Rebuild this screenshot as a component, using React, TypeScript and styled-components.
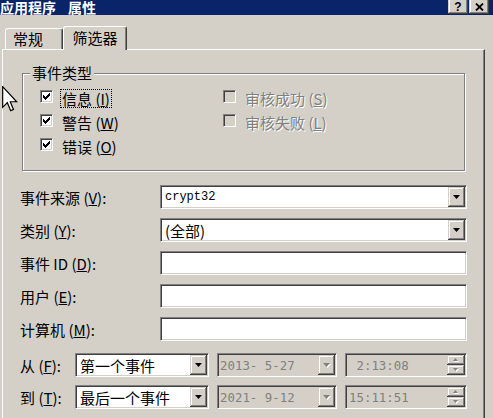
import React from "react";
import styled, { createGlobalStyle, css } from "styled-components";

const FACE = "#d4d0c8";
const SHADOW = "#808080";
const DARK = "#404040";
const HI = "#ffffff";
const CJK = `"Noto Sans CJK SC", "Noto Sans", sans-serif`;

const Global = createGlobalStyle`
  html, body { margin: 0; padding: 0; background: ${FACE}; overflow: hidden; }
  #root { width: 493px; height: 418px; }
`;

const raised = css`
  box-shadow: inset -1px -1px ${DARK}, inset 1px 1px ${FACE}, inset -2px -2px ${SHADOW}, inset 2px 2px ${HI};
`;

const sunken = css`
  border: 1px solid;
  border-color: ${SHADOW} ${HI} ${HI} ${SHADOW};
  box-shadow: inset 1px 1px ${DARK}, inset -1px -1px ${FACE};
  padding: 1px;
`;

const Window = styled.div`
  width: 493px;
  height: 418px;
  overflow: hidden;
  position: relative;
  background: ${FACE};
  font-family: ${CJK};
  font-size: 15px;
  color: #000;
`;

const TitleBar = styled.div`
  height: 15px;
  background: #0a246a;
  display: flex;
  align-items: flex-end;
  justify-content: space-between;
`;

const Title = styled.div`
  display: flex;
  gap: 12px;
  color: #fff;
  font-weight: bold;
  font-size: 14px;
  line-height: 14px;
  margin: 0 0 1px 0;
  white-space: nowrap;
`;

const CaptionGroup = styled.div`
  display: flex;
  gap: 1px;
  margin: 0 4px 1px 0;
`;

const CaptionButton = styled.div`
  width: 20px;
  height: 17px;
  box-sizing: border-box;
  background: ${FACE};
  ${raised};
  display: flex;
  align-items: center;
  justify-content: center;
  padding-top: 2px;
  font-family: "Liberation Sans", sans-serif;
  font-weight: bold;
  font-size: 12px;
  line-height: 12px;
`;

const Body = styled.div`
  padding: 11px 0 0 2px;
`;

const TabStrip = styled.div`
  display: flex;
  align-items: flex-end;
  height: 23px;
  padding-left: 3px;
`;

const Tab = styled.div<{ $active?: boolean }>`
  box-sizing: border-box;
  display: flex;
  align-items: center;
  background: ${FACE};
  border-top: 1px solid ${HI};
  border-left: 1px solid ${HI};
  border-right: 1px solid ${DARK};
  border-radius: 3px 3px 0 0;
  box-shadow: inset -1px 0 ${SHADOW};
  line-height: 16px;
  white-space: nowrap;
  ${(p) =>
    p.$active
      ? css`
          width: 64px;
          height: 24px;
          margin-bottom: -1px;
          position: relative;
          z-index: 1;
          justify-content: center;
          padding-bottom: 2px;
        `
      : css`
          width: 58px;
          height: 21px;
          padding-left: 7px;
        `}
`;

const Panel = styled.div`
  width: 483px;
  height: 420px;
  box-sizing: border-box;
  border-top: 1px solid ${HI};
  border-left: 1px solid ${HI};
  border-right: 1px solid ${DARK};
  box-shadow: inset -1px 0 ${SHADOW};
  padding: 23px 17px 0 17px;
`;

const Group = styled.div`
  position: relative;
  height: 98px;
  box-sizing: border-box;
  margin: 0 2px 0 2px;
  border: 1px solid ${SHADOW};
  box-shadow: inset 1px 1px ${HI}, 1px 1px ${HI};
  padding: 15px 0 0 17px;
  display: grid;
  grid-template-columns: 183px 1fr;
  grid-template-rows: repeat(3, 19px);
  grid-auto-flow: column;
  row-gap: 5px;
`;

const Legend = styled.div`
  position: absolute;
  top: -9px;
  left: 7px;
  padding: 0 2px;
  background: ${FACE};
  line-height: 16px;
`;

const CheckRow = styled.div`
  display: flex;
  align-items: flex-start;
  gap: 7px;
`;

const CheckBox = styled.div<{ $disabled?: boolean }>`
  width: 13px;
  height: 13px;
  box-sizing: border-box;
  margin-top: 1px;
  ${sunken};
  background: ${(p) => (p.$disabled ? FACE : HI)};
  display: flex;
  align-items: center;
  justify-content: center;
`;

const CheckLabel = styled.div<{ $focus?: boolean; $disabled?: boolean }>`
  border: 1px ${(p) => (p.$focus ? "dotted #000" : "solid transparent")};
  padding: 0 1px;
  line-height: 17px;
  white-space: nowrap;
  color: ${(p) => (p.$disabled ? SHADOW : "#000")};
  text-shadow: ${(p) => (p.$disabled ? `1px 1px 0 ${HI}` : "none")};
`;

const Fields = styled.div<{ $gap: number; $top: number }>`
  display: flex;
  flex-direction: column;
  gap: ${(p) => p.$gap}px;
  margin-top: ${(p) => p.$top}px;
`;

const FieldRow = styled.div`
  display: flex;
  align-items: center;
  height: 24px;
`;

const FieldLabel = styled.div<{ $w: number }>`
  width: ${(p) => p.$w}px;
  flex: none;
  white-space: nowrap;
  line-height: 17px;
`;

const Controls = styled.div`
  flex: 1;
  display: flex;
  gap: 8px;
  height: 100%;
`;

const Box = styled.div<{ $w?: number; $disabled?: boolean }>`
  ${sunken};
  box-sizing: border-box;
  height: 24px;
  display: flex;
  align-items: stretch;
  background: ${(p) => (p.$disabled ? FACE : HI)};
  ${(p) => (p.$w ? `width: ${p.$w}px; flex: none;` : "flex: 1;")}
`;

const BoxText = styled.div<{ $mono?: boolean; $disabled?: boolean; $pad?: number }>`
  flex: 1;
  display: flex;
  align-items: center;
  padding-left: ${(p) => p.$pad ?? 3}px;
  white-space: pre;
  overflow: hidden;
  color: ${(p) => (p.$disabled ? SHADOW : "#000")};
  ${(p) =>
    p.$mono
      ? css`
          font-family: ${p.$disabled ? `"DejaVu Sans Mono", monospace` : `"Liberation Mono", monospace`};
          font-size: ${p.$disabled ? "12.4px" : "12px"};
        `
      : css`
          font-size: 15px;
        `}
`;

const DropButton = styled.div`
  width: 17px;
  flex: none;
  background: ${FACE};
  ${raised};
  display: flex;
  align-items: center;
  justify-content: center;
`;

const SpinColumn = styled.div`
  width: 18px;
  flex: none;
  display: flex;
  flex-direction: column;
`;

const SpinButton = styled.div`
  flex: 1;
  background: ${FACE};
  ${raised};
  display: flex;
  align-items: center;
  justify-content: center;
`;

const Cursor = styled.svg`
  position: absolute;
  left: 2px;
  top: 86px;
  z-index: 5;
`;

const Arrow: React.FC<{ disabled?: boolean; small?: boolean; up?: boolean }> = ({ disabled, small, up }) => {
  const w = small ? 5 : 7;
  const h = small ? 3 : 4;
  const pts = up ? `0,${h} ${w},${h} ${w / 2},0` : `0,0 ${w},0 ${w / 2},${h}`;
  return (
    <svg width={w + 1} height={h + 1} viewBox={`0 0 ${w + 1} ${h + 1}`}>
      {disabled && <polygon points={pts} fill={HI} transform="translate(1,1)" />}
      <polygon points={pts} fill={disabled ? SHADOW : "#000"} />
    </svg>
  );
};

const CHECK_PIXELS: [number, number][] = [
  [6, 0],
  [5, 1], [6, 1],
  [0, 2], [4, 2], [5, 2], [6, 2],
  [0, 3], [1, 3], [3, 3], [4, 3], [5, 3],
  [0, 4], [1, 4], [2, 4], [3, 4], [4, 4],
  [1, 5], [2, 5], [3, 5],
  [2, 6],
];

const Check = () => (
  <svg width="7" height="7" viewBox="0 0 7 7" shapeRendering="crispEdges">
    {CHECK_PIXELS.map(([x, y]) => (
      <rect key={`${x}-${y}`} x={x} y={y} width="1" height="1" fill="#000" />
    ))}
  </svg>
);

const Combo: React.FC<{ text: string; w?: number; mono?: boolean }> = ({ text, w, mono }) => (
  <Box $w={w}>
    <BoxText $mono={mono}>{text}</BoxText>
    <DropButton>
      <Arrow />
    </DropButton>
  </Box>
);

const DateBox: React.FC<{ text: string }> = ({ text }) => (
  <Box $w={120} $disabled>
    <BoxText $mono $disabled $pad={1}>
      {text}
    </BoxText>
    <DropButton>
      <Arrow disabled />
    </DropButton>
  </Box>
);

const TimeBox: React.FC<{ text: string }> = ({ text }) => (
  <Box $disabled>
    <BoxText $mono $disabled $pad={2}>
      {text}
    </BoxText>
    <SpinColumn>
      <SpinButton>
        <Arrow disabled small up />
      </SpinButton>
      <SpinButton>
        <Arrow disabled small />
      </SpinButton>
    </SpinColumn>
  </Box>
);

const CheckItem: React.FC<{ label: string; k: string; checked?: boolean; disabled?: boolean; focus?: boolean }> = ({
  label,
  k,
  checked,
  disabled,
  focus,
}) => (
  <CheckRow>
    <CheckBox $disabled={disabled}>{checked && <Check />}</CheckBox>
    <CheckLabel $focus={focus} $disabled={disabled}>
      {label} (<u>{k}</u>)
    </CheckLabel>
  </CheckRow>
);

const Mn: React.FC<{ label: string; k: string }> = ({ label, k }) => (
  <>
    {label} (<u>{k}</u>):
  </>
);

export default function App() {
  return (
    <>
      <Global />
      <Window>
        <TitleBar>
          <Title>
            <span>应用程序</span>
            <span>属性</span>
          </Title>
          <CaptionGroup>
            <CaptionButton>?</CaptionButton>
            <CaptionButton>
              <svg width="9" height="8" viewBox="0 0 9 8">
                <path d="M1 0.5 L8 7.5 M8 0.5 L1 7.5" stroke="#000" strokeWidth="1.8" />
              </svg>
            </CaptionButton>
          </CaptionGroup>
        </TitleBar>
        <Body>
          <TabStrip>
            <Tab>常规</Tab>
            <Tab $active>筛选器</Tab>
          </TabStrip>
          <Panel>
            <Group>
              <Legend>事件类型</Legend>
              <CheckItem label="信息" k="I" checked focus />
              <CheckItem label="警告" k="W" checked />
              <CheckItem label="错误" k="O" checked />
              <CheckItem label="审核成功" k="S" disabled />
              <CheckItem label="审核失败" k="L" disabled />
            </Group>
            <Fields $gap={9} $top={14}>
              <FieldRow>
                <FieldLabel $w={140}>
                  <Mn label="事件来源" k="V" />
                </FieldLabel>
                <Combo text="crypt32" mono />
              </FieldRow>
              <FieldRow>
                <FieldLabel $w={140}>
                  <Mn label="类别" k="Y" />
                </FieldLabel>
                <Combo text="(全部)" />
              </FieldRow>
              <FieldRow>
                <FieldLabel $w={140}>
                  <Mn label="事件 ID" k="D" />
                </FieldLabel>
                <Box />
              </FieldRow>
              <FieldRow>
                <FieldLabel $w={140}>
                  <Mn label="用户" k="E" />
                </FieldLabel>
                <Box />
              </FieldRow>
              <FieldRow>
                <FieldLabel $w={140}>
                  <Mn label="计算机" k="M" />
                </FieldLabel>
                <Box />
              </FieldRow>
            </Fields>
            <Fields $gap={8} $top={12}>
              <FieldRow>
                <FieldLabel $w={55}>
                  <Mn label="从" k="F" />
                </FieldLabel>
                <Controls>
                  <Combo text="第一个事件" w={134} />
                  <DateBox text="2013- 5-27" />
                  <TimeBox text=" 2:13:08" />
                </Controls>
              </FieldRow>
              <FieldRow>
                <FieldLabel $w={55}>
                  <Mn label="到" k="T" />
                </FieldLabel>
                <Controls>
                  <Combo text="最后一个事件" w={134} />
                  <DateBox text="2021- 9-12" />
                  <TimeBox text="15:11:51" />
                </Controls>
              </FieldRow>
            </Fields>
          </Panel>
        </Body>
        <Cursor width="16" height="26" viewBox="0 0 12 19.5">
          <path d="M0.5 0.5 L0.5 16 L4 12.5 L6.5 18.5 L8.6 17.6 L6.2 11.8 L11 11.8 Z" fill="#fff" stroke="#000" strokeWidth="0.9" strokeLinejoin="miter" />
        </Cursor>
      </Window>
    </>
  );
}
